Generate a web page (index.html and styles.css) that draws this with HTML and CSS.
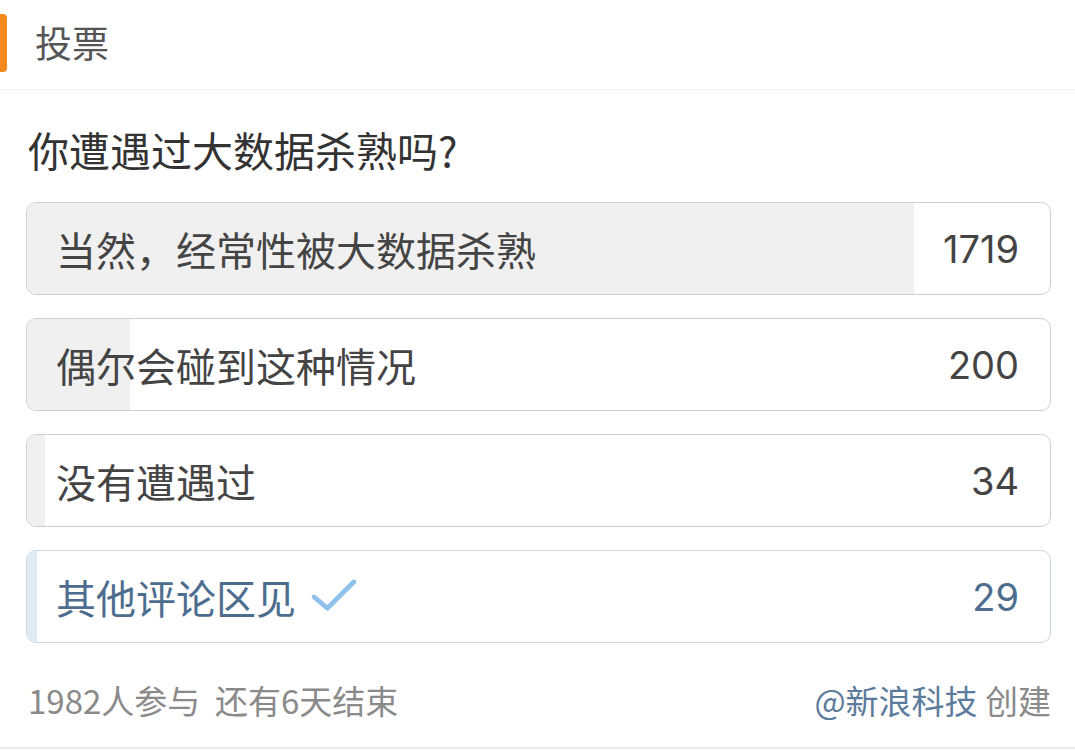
FILE: index.html
```html
<!DOCTYPE html>
<html lang="zh-CN">
<head>
<meta charset="utf-8">
<link rel="stylesheet" href="styles.css">
</head>
<body>
<div class="card">
  <div class="header">
    <span class="mark"></span>
    <span class="title">投票</span>
  </div>
  <div class="question">你遭遇过大数据杀熟吗?</div>
  <div class="options">
    <div class="option">
      <div class="fill" style="width:86.7%"></div>
      <span class="label">当然，经常性被大数据杀熟</span>
      <span class="count">1719</span>
    </div>
    <div class="option">
      <div class="fill" style="width:10.1%"></div>
      <span class="label">偶尔会碰到这种情况</span>
      <span class="count">200</span>
    </div>
    <div class="option">
      <div class="fill" style="width:1.8%"></div>
      <span class="label">没有遭遇过</span>
      <span class="count">34</span>
    </div>
    <div class="option chosen">
      <div class="fill" style="width:1%"></div>
      <span class="label">其他评论区见<svg class="check" viewBox="0 0 50 40" width="48" height="38"><path d="M4 22 L18 34 L46 6" fill="none" stroke="#8fc1ea" stroke-width="5" stroke-linecap="round" stroke-linejoin="round"/></svg></span>
      <span class="count">29</span>
    </div>
  </div>
  <div class="footer">
    <span class="stats">1982人参与&nbsp;&nbsp;还有6天结束</span>
    <span class="creator"><span class="author">@新浪科技</span> 创建</span>
  </div>
</div>
</body>
</html>
```

FILE: styles.css
```css
html, body {
  margin: 0;
  padding: 0;
  background: #ffffff;
}
body {
  font-family: "Noto Sans CJK SC", "Noto Sans", sans-serif;
  width: 1075px;
  height: 753px;
  overflow: hidden;
}
.card {
  height: 747px;
  border-bottom: 2px solid #ececec;
  background: #fff;
  display: flex;
  flex-direction: column;
}
.header {
  height: 90px;
  border-bottom: 1px solid #efefef;
  display: flex;
  align-items: center;
  box-sizing: border-box;
  padding-bottom: 4px;
}
.mark {
  width: 7px;
  height: 58px;
  background: #f5891e;
  border-radius: 0 4px 4px 0;
}
.title {
  margin-left: 28px;
  font-size: 37px;
  color: #555;
  line-height: 1;
}
.question {
  margin: 30px 0 0 28px;
  font-size: 41px;
  line-height: 58px;
  color: #333;
}
.options {
  margin: 24px 24px 0 26px;
  display: flex;
  flex-direction: column;
  gap: 23px;
}
.option {
  position: relative;
  height: 93px;
  border: 1px solid #d0d0d0;
  border-radius: 10px;
  overflow: hidden;
  display: flex;
  align-items: center;
  justify-content: space-between;
  padding: 0 31px 0 29px;
  box-sizing: border-box;
  color: #444;
}
.fill {
  position: absolute;
  left: 0;
  top: 0;
  bottom: 0;
  background: #f0f0f0;
}
.label, .count {
  position: relative;
  font-size: 40px;
  line-height: 1;
  display: flex;
  align-items: center;
}
.count {
  font-family: Inter, "Noto Sans", sans-serif;
  font-size: 38px;
}
.chosen {
  border-color: #c8d8e6;
  color: #4d6d8e;
}
.chosen .fill {
  background: #dfeaf5;
}
.check {
  margin-left: 14px;
  margin-top: -4px;
}
.footer {
  margin: 36px 24px 0 28px;
  display: flex;
  justify-content: space-between;
  align-items: center;
  font-size: 33px;
  line-height: 42px;
  color: #8a8a8a;
}
.author {
  color: #5c7b9c;
}
```
